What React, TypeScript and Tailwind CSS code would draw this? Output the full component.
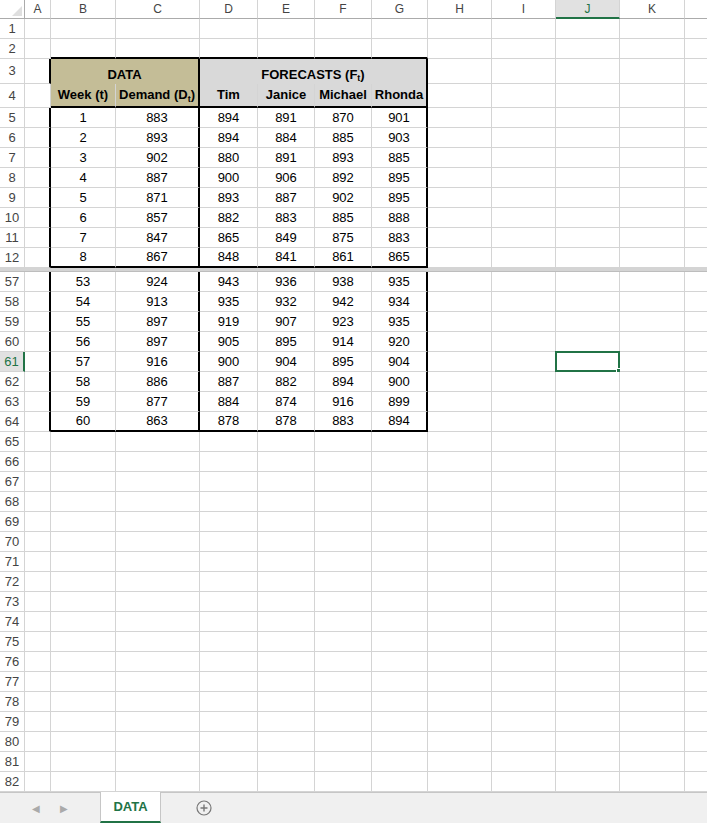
import React from 'react';

const cols = [
  { k: 'A', w: 26 },
  { k: 'B', w: 65 },
  { k: 'C', w: 84 },
  { k: 'D', w: 58 },
  { k: 'E', w: 57 },
  { k: 'F', w: 57 },
  { k: 'G', w: 56 },
  { k: 'H', w: 64 },
  { k: 'I', w: 64 },
  { k: 'J', w: 64 },
  { k: 'K', w: 65 },
  { k: 'L', w: 40 },
];

const top: number[][] = [
  [1, 883, 894, 891, 870, 901],
  [2, 893, 894, 884, 885, 903],
  [3, 902, 880, 891, 893, 885],
  [4, 887, 900, 906, 892, 895],
  [5, 871, 893, 887, 902, 895],
  [6, 857, 882, 883, 885, 888],
  [7, 847, 865, 849, 875, 883],
  [8, 867, 848, 841, 861, 865],
];
const bottom: number[][] = [
  [53, 924, 943, 936, 938, 935],
  [54, 913, 935, 932, 942, 934],
  [55, 897, 919, 907, 923, 935],
  [56, 897, 905, 895, 914, 920],
  [57, 916, 900, 904, 895, 904],
  [58, 886, 887, 882, 894, 900],
  [59, 877, 884, 874, 916, 899],
  [60, 863, 878, 878, 883, 894],
];

type Row = { n: number; h: number; vals?: (number | string)[]; inTable?: boolean; last?: boolean; header?: 3 | 4 };

function Cell({ ci, row, children }: { ci: number; row: Row; children?: React.ReactNode }) {
  const t = row.inTable || row.header;
  let right = 'border-r border-[#d4d4d4]';
  if (t && (ci === 0 || ci === 2 || ci === 6)) right = 'border-r-2 border-r-black';
  let bottomB = 'border-b border-b-[#d4d4d4]';
  if (t && ci >= 1 && ci <= 6 && (row.header === 4 || row.last)) bottomB = 'border-b-2 border-b-black';
  if (row.n === 2 && ci >= 1 && ci <= 6) bottomB = 'border-b-2 border-b-black';
  let bg = 'bg-white';
  if (row.header && (ci === 1 || ci === 2)) bg = 'bg-[#c4bd97]';
  if (row.header && ci >= 3 && ci <= 6) bg = 'bg-[#d9d9d9]';
  const sel = row.n === 61 && ci === 9;
  return (
    <div
      className={`relative shrink-0 flex items-center justify-center text-[13px] text-black ${right} ${bottomB} ${bg}`}
      style={{ width: cols[ci].w }}
    >
      {children}
      {sel && (
        <div className="absolute -left-px -top-px -right-px -bottom-px border-2 border-[#217346]">
          <div className="absolute -right-[4px] -bottom-[4px] w-[6px] h-[6px] bg-[#217346] border border-white" />
        </div>
      )}
    </div>
  );
}

function SheetRow({ row }: { row: Row }) {
  const active = row.n === 61;
  return (
    <div className="flex" style={{ height: row.h }}>
      <div
        className={`w-[25px] shrink-0 flex items-center justify-center text-[13px] border-r border-b border-[#d4d4d4] ${
          active ? 'bg-[#e1e1e1] text-[#217346] border-r-2 border-r-[#217346]' : 'bg-white text-[#444]'
        }`}
      >
        {row.n}
      </div>
      {cols.map((c, ci) => {
        let content: React.ReactNode = null;
        if (row.vals && ci >= 1 && ci <= 6) content = row.vals[ci - 1];
        if (row.header === 3) {
          if (ci === 1) content = null;
        }
        if (row.header === 4) {
          const hs = ['Week (t)', <>Demand (D<sub className="text-[9px]">t</sub>)</>, 'Tim', 'Janice', 'Michael', 'Rhonda'];
          if (ci >= 1 && ci <= 6) content = <span className="font-bold pt-[4px]">{hs[ci - 1]}</span>;
        }
        return (
          <Cell key={c.k} ci={ci} row={row}>
            {content}
          </Cell>
        );
      })}
    </div>
  );
}

export default function App() {
  const rows1: Row[] = [
    { n: 1, h: 20 },
    { n: 2, h: 20 },
  ];
  const tRows: Row[] = top.map((v, i) => ({ n: 5 + i, h: 20, vals: v, inTable: true, last: i === 7 }));
  const bRows: Row[] = bottom.map((v, i) => ({ n: 57 + i, h: 20, vals: v, inTable: true, last: i === 7 }));
  const empty: Row[] = Array.from({ length: 18 }, (_, i) => ({ n: 65 + i, h: 20 }));

  return (
    <div className="w-[707px] h-[823px] overflow-hidden bg-white flex flex-col" style={{ fontFamily: '"Liberation Sans", Arial, sans-serif' }}>
      {/* column headers */}
      <div className="flex h-[19px] shrink-0 bg-white">
        <div className="w-[25px] shrink-0 border-r border-b border-[#ababab] relative">
          <div className="absolute right-[2px] bottom-[2px] w-0 h-0 border-l-[10px] border-l-transparent border-b-[10px] border-b-[#dfdfdf]" />
        </div>
        {cols.map((c) => (
          <div
            key={c.k}
            className={`shrink-0 flex items-center justify-center text-[12px] border-r border-[#d4d4d4] ${
              c.k === 'J' ? 'bg-[#e1e1e1] text-[#217346] border-b-2 border-b-[#217346]' : 'text-[#444] border-b border-b-[#ababab]'
            }`}
            style={{ width: c.w }}
          >
            {c.k === 'L' ? '' : c.k}
          </div>
        ))}
      </div>

      {rows1.map((r) => <SheetRow key={r.n} row={r} />)}

      {/* header rows 3-4 */}
      <div className="flex h-[49px]">
        <div className="w-[25px] shrink-0 flex flex-col">
          <div className="h-[25px] flex items-center justify-center text-[13px] text-[#444] border-r border-b border-[#d4d4d4]">3</div>
          <div className="h-[24px] flex items-center justify-center text-[13px] text-[#444] border-r border-b border-[#d4d4d4]">4</div>
        </div>
        <div className="flex flex-col">
          <div className="flex h-[25px]">
            <Cell ci={0} row={{ n: 3, h: 25, header: 3 }} />
            <div className="shrink-0 w-[149px] bg-[#c4bd97] border-r-2 border-r-black flex items-end justify-center text-[13px] font-bold">DATA</div>
            <div className="shrink-0 w-[228px] bg-[#d9d9d9] border-r-2 border-r-black flex items-end justify-center text-[13px] font-bold">
              <span>FORECASTS (F<sub className="text-[9px]">t</sub>)</span>
            </div>
            {cols.slice(7).map((c, i) => (
              <Cell key={c.k} ci={7 + i} row={{ n: 3, h: 25 }} />
            ))}
          </div>
          <div className="flex h-[24px]">
            {cols.map((c, ci) => {
              const hs: React.ReactNode[] = ['Week (t)', <>Demand (D<sub className="text-[9px]">t</sub>)</>, 'Tim', 'Janice', 'Michael', 'Rhonda'];
              return (
                <Cell key={c.k} ci={ci} row={{ n: 4, h: 24, header: ci >= 1 && ci <= 6 ? 4 : undefined }}>
                  {ci >= 1 && ci <= 6 && <span className="font-bold">{hs[ci - 1]}</span>}
                </Cell>
              );
            })}
          </div>
        </div>
      </div>

      {tRows.map((r) => <SheetRow key={r.n} row={r} />)}
      <div className="h-[4px] shrink-0 bg-[#d4d4d4] border-b border-[#bdbdbd]" />
      {bRows.map((r) => <SheetRow key={r.n} row={r} />)}
      {empty.map((r) => <SheetRow key={r.n} row={r} />)}

      {/* sheet tabs */}
      <div className="flex-1 flex bg-[#f0f0f0] border-t border-[#c6c6c6] text-[#aaa]">
        <div className="w-[100px] flex items-center justify-center gap-[20px] text-[10px]">
          <span>◀</span>
          <span>▶</span>
        </div>
        <div className="w-[61px] -mt-px bg-white border-x border-[#c6c6c6] border-b-2 border-b-[#217346] flex items-center justify-center text-[13px] font-bold text-[#217346]">
          DATA
        </div>
        <div className="w-[85px] flex items-center justify-center">
          <svg width="16" height="16" viewBox="0 0 16 16">
            <circle cx="8" cy="8" r="7" fill="none" stroke="#777" strokeWidth="1.2" />
            <path d="M8 4.5v7M4.5 8h7" stroke="#777" strokeWidth="1.4" />
          </svg>
        </div>
      </div>
    </div>
  );
}
